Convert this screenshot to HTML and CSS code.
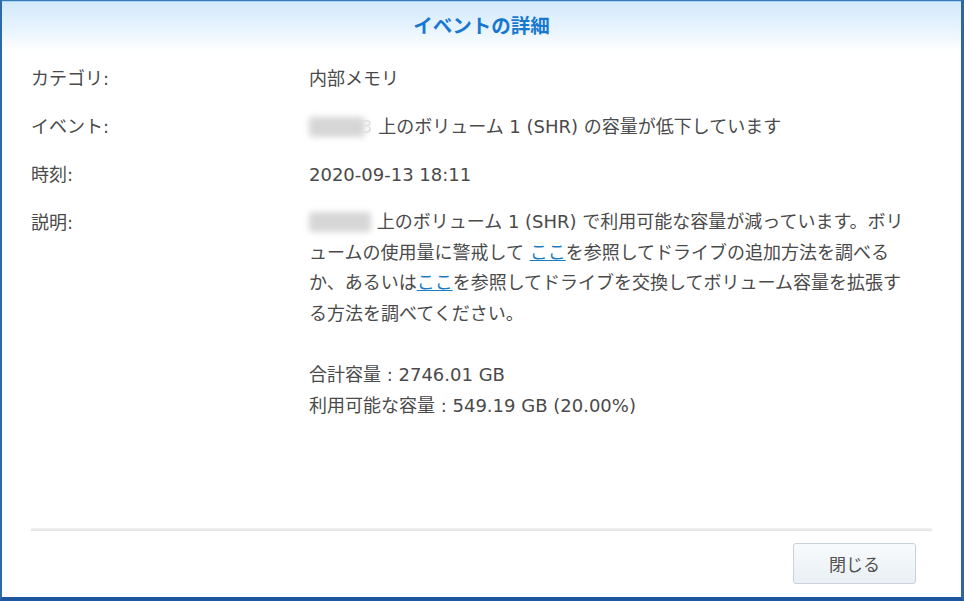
FILE: index.html
```html
<!DOCTYPE html>
<html lang="ja">
<head>
<meta charset="utf-8">
<title>イベントの詳細</title>
<link rel="stylesheet" href="styles.css">
</head>
<body>
<div class="dialog">
  <div class="header">イベントの詳細</div>
  <div class="content">
    <div class="row">
      <div class="label">カテゴリ:</div>
      <div class="value">内部メモリ</div>
    </div>
    <div class="row">
      <div class="label">イベント:</div>
      <div class="value"><span class="blur short"></span><span class="ghost">3</span> 上のボリューム 1 (SHR) の容量が低下しています</div>
    </div>
    <div class="row">
      <div class="label">時刻:</div>
      <div class="value">2020-09-13 18:11</div>
    </div>
    <div class="row">
      <div class="label">説明:</div>
      <div class="value desc"><span class="blur"></span> 上のボリューム 1 (SHR) で利用可能な容量が減っています。ボリ<br>ュームの使用量に警戒して <a class="link" href="#">ここ</a>を参照してドライブの追加方法を調べる<br>か、あるいは<a class="link" href="#">ここ</a>を参照してドライブを交換してボリューム容量を拡張す<br>る方法を調べてください。<br><br>合計容量 : 2746.01 GB<br>利用可能な容量 : 549.19 GB (20.00%)</div>
    </div>
  </div>
  <div class="footer">
    <div class="sep"></div>
    <div class="actions">
      <button class="btn">閉じる</button>
    </div>
  </div>
</div>
</body>
</html>
```
FILE: styles.css
```css
* { box-sizing: border-box; }
html, body { margin: 0; padding: 0; }
body {
  width: 964px;
  height: 601px;
  font-family: "DejaVu Sans", "Noto Sans CJK JP", sans-serif;
  background: #ffffff;
  overflow: hidden;
}
.dialog {
  width: 964px;
  height: 601px;
  border-top: 1px solid #3a78b8;
  border-left: 2px solid #2f6aa8;
  border-right: 3px solid #2f66a4;
  border-bottom: 4px solid #1f56a0;
  display: flex;
  flex-direction: column;
  background: #fff;
}
.header {
  height: 51px;
  flex: none;
  display: flex;
  align-items: center;
  justify-content: center;
  font-size: 19.5px;
  font-weight: bold;
  color: #1878cf;
  background: linear-gradient(to bottom, #d3e9fb 0%, #e6f3fd 50%, #ffffff 100%);
  border-top: 1px solid #a6d6f6;
  padding-bottom: 5px;
}
.content {
  flex: 1;
  padding: 11px 0 0 29px;
  display: flex;
  flex-direction: column;
  gap: 17px;
  font-size: 18px;
  color: #4a4a4a;
  line-height: 31px;
}
.row {
  display: flex;
}
.label {
  width: 278px;
  flex: none;
}
.value {
  white-space: nowrap;
}
.desc {
  line-height: 30.6px;
}
.blur {
  display: inline-block;
  width: 62px;
  height: 20px;
  vertical-align: -4px;
  background: #d6d6d6;
  filter: blur(3px);
  border-radius: 3px;
}
.blur.short {
  width: 56px;
}
.ghost {
  color: #e0e0e0;
  margin-left: -4px;
  filter: blur(0.6px);
}
.link {
  color: #1c7cc0;
  text-decoration: underline;
}
.footer {
  flex: none;
  padding: 0 29px 13px 29px;
}
.sep {
  height: 3px;
  background: linear-gradient(to bottom, #f2f2f2, #e2e2e2);
}
.actions {
  display: flex;
  justify-content: flex-end;
  padding-top: 12px;
  padding-right: 16px;
}
.btn {
  width: 123px;
  height: 41px;
  font-family: "DejaVu Sans", "Noto Sans CJK JP", sans-serif;
  font-size: 17px;
  color: #505050;
  border: 1px solid #c9d2da;
  border-radius: 3px;
  background: linear-gradient(to bottom, #f8fbfd, #e9eff4);
}
```
